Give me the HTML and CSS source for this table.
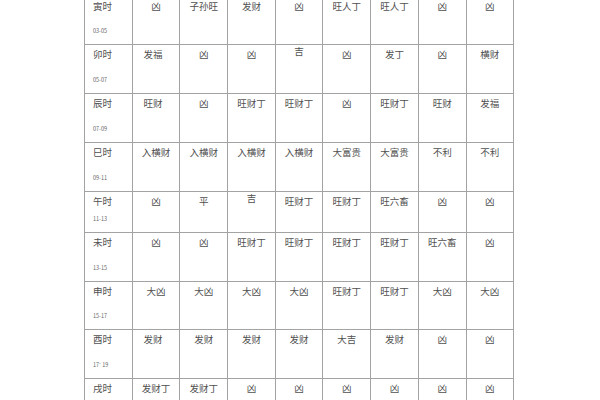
FILE: index.html
```html
<!DOCTYPE html>
<html lang="zh">
<head>
<meta charset="utf-8">
<link rel="stylesheet" href="styles.css">
</head>
<body>
<table class="grid">
<colgroup>
<col><col><col><col><col><col><col><col><col>
</colgroup>
<tbody>
<tr class="r44 first">
<td class="lab"><span class="nm">寅时</span><span class="tm">03-05</span></td>
<td>凶</td><td>子孙旺</td><td>发财</td><td>凶</td><td>旺人丁</td><td>旺人丁</td><td>凶</td><td>凶</td>
</tr>
<tr class="r49">
<td class="lab"><span class="nm">卯时</span><span class="tm">05-07</span></td>
<td class="lft">发福</td><td>凶</td><td>凶</td><td class="up">吉</td><td>凶</td><td>发丁</td><td>凶</td><td>横财</td>
</tr>
<tr class="r49">
<td class="lab"><span class="nm">辰时</span><span class="tm">07-09</span></td>
<td class="lft">旺财</td><td>凶</td><td>旺财丁</td><td>旺财丁</td><td>凶</td><td>旺财丁</td><td>旺财</td><td>发福</td>
</tr>
<tr class="r49">
<td class="lab"><span class="nm">巳时</span><span class="tm">09-11</span></td>
<td>入横财</td><td>入横财</td><td>入横财</td><td>入横财</td><td>大富贵</td><td>大富贵</td><td>不利</td><td>不利</td>
</tr>
<tr class="r41">
<td class="lab"><span class="nm">午时</span><span class="tm">11-13</span></td>
<td>凶</td><td>平</td><td class="up">吉</td><td>旺财丁</td><td>旺财丁</td><td>旺六畜</td><td>凶</td><td>凶</td>
</tr>
<tr class="r49">
<td class="lab"><span class="nm">未时</span><span class="tm">13-15</span></td>
<td>凶</td><td>凶</td><td>旺财丁</td><td>旺财丁</td><td>旺财丁</td><td>旺财丁</td><td>旺六畜</td><td>凶</td>
</tr>
<tr class="r48">
<td class="lab"><span class="nm">申时</span><span class="tm">15-17</span></td>
<td>大凶</td><td>大凶</td><td>大凶</td><td>大凶</td><td>旺财丁</td><td>旺财丁</td><td>大凶</td><td>大凶</td>
</tr>
<tr class="r49">
<td class="lab"><span class="nm">酉时</span><span class="tm">17⁻ 19</span></td>
<td class="lft">发财</td><td>发财</td><td>发财</td><td>发财</td><td>大吉</td><td>发财</td><td>凶</td><td>凶</td>
</tr>
<tr class="r22">
<td class="lab"><span class="nm">戌时</span></td>
<td>发财丁</td><td>发财丁</td><td>凶</td><td>凶</td><td>凶</td><td>凶</td><td>凶</td><td>凶</td>
</tr>
</tbody>
</table>
</body>
</html>
```

FILE: styles.css
```css
html, body {
  margin: 0;
  padding: 0;
  background: #ffffff;
  overflow: hidden;
}
body {
  width: 600px;
  height: 400px;
  font-family: "Noto Sans CJK SC", "Noto Sans", sans-serif;
  color: #505050;
}
.grid {
  border-collapse: collapse;
  table-layout: fixed;
  width: 430px;
  margin-left: 84px;
}
.grid col {
  width: 47.7px;
}
.grid td {
  border: 1px solid #a3a3a3;
  padding: 3px 0 0 0;
  vertical-align: top;
  text-align: center;
  font-size: 9.5px;
  line-height: 12px;
  font-weight: 400;
}
.r49 { height: 49px; }
.r48 { height: 48px; }
.r44 { height: 44px; }
.r41 { height: 41px; }
.r22 { height: 22px; }
.first td {
  border-top: none;
}
.grid .first td,
.grid .first td.lab {
  padding-top: 0;
}
.grid td.lab {
  text-align: left;
  padding: 3px 0 0 8px;
}
.lab {
  position: relative;
}
.nm {
  display: block;
}
.tm {
  position: absolute;
  left: 8px;
  bottom: 9px;
  font-size: 5.5px;
  line-height: 7px;
  color: #666666;
}
.grid td.up {
  padding-top: 0;
}
.grid td.lft {
  padding-right: 6px;
}
```
